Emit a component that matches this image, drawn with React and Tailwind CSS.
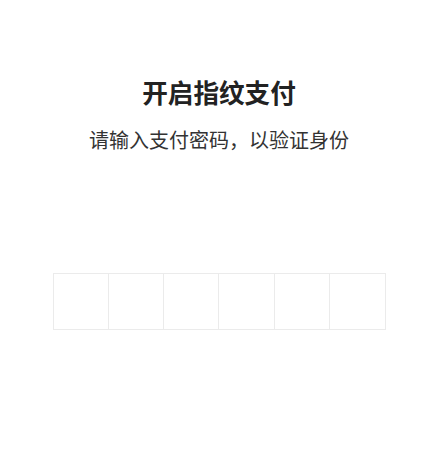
export default function App() {
  const cells = [0, 1, 2, 3, 4, 5];
  return (
    <div className="w-[448px] h-[466px] bg-white">
      <div className="w-[438px] flex flex-col items-center" style={{ fontFamily: '"Noto Sans CJK SC", "Noto Sans", sans-serif' }}>
        <div className="mt-[74px] text-[25.6px] leading-[36px] font-bold text-[#222]">开启指纹支付</div>
        <div className="mt-[16px] text-[20px] leading-[28px] text-[#333]">请输入支付密码，以验证身份</div>
        <div className="mt-[119px] flex border border-[#ebebeb] w-[333px] h-[57px]">
          {cells.map((i) => (
            <div key={i} className={"flex-1 " + (i < 5 ? "border-r border-[#ebebeb]" : "")} />
          ))}
        </div>
      </div>
    </div>
  );
}
